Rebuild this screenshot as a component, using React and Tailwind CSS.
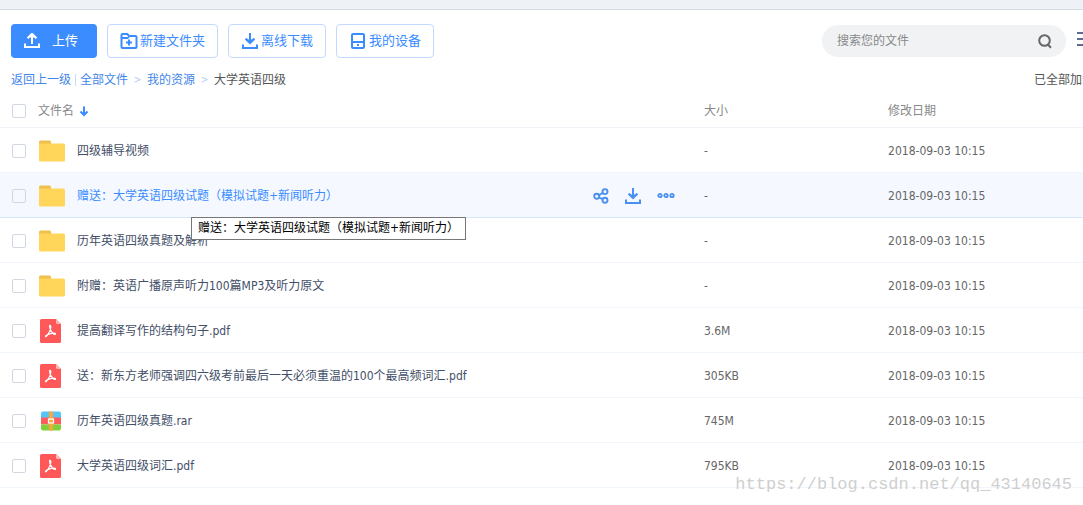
import React from "react";

const files = [
  { name: "四级辅导视频", type: "folder", size: "-" },
  { name: "赠送：大学英语四级试题（模拟试题+新闻听力）", type: "folder", size: "-", active: true },
  { name: "历年英语四级真题及解析", type: "folder", size: "-" },
  { name: "附赠：英语广播原声听力100篇MP3及听力原文", type: "folder", size: "-" },
  { name: "提高翻译写作的结构句子.pdf", type: "pdf", size: "3.6M" },
  { name: "送：新东方老师强调四六级考前最后一天必须重温的100个最高频词汇.pdf", type: "pdf", size: "305KB" },
  { name: "历年英语四级真题.rar", type: "rar", size: "745M" },
  { name: "大学英语四级词汇.pdf", type: "pdf", size: "795KB" },
];

function UploadIcon() {
  return (
    <svg width="16" height="16" viewBox="0 0 16 16" fill="none" stroke="currentColor" strokeWidth="2" aria-hidden="true">
      <path d="M8 11V2" />
      <path d="M3.6 5.200 8 .9l4.400 4.300" strokeWidth="2.200" />
      <path d="M5.500 4.500 8 2l2.500 2.500Z" fill="currentColor" stroke="none" />
      <path d="M1 10.500V14h14v-3.500" />
    </svg>
  );
}

function DownloadIcon() {
  return (
    <svg width="16" height="16" viewBox="0 0 16 16" fill="none" stroke="currentColor" strokeWidth="2" aria-hidden="true">
      <path d="M8 0v10" />
      <path d="M3.6 5.600 8 10l4.400-4.400" strokeWidth="2.200" />
      <path d="M5.500 6.500 8 9l2.500-2.500Z" fill="currentColor" stroke="none" />
      <path d="M1 11.500V15h14v-3.500" />
    </svg>
  );
}

function NewFolderIcon() {
  return (
    <svg width="18" height="16" viewBox="0 0 18 16" fill="none" stroke="currentColor" strokeWidth="2" aria-hidden="true">
      <path d="M1.500 14V2q0-1 1-1h4.800L9 3h6.500q1 0 1 1v10q0 1-1 1h-13q-1 0-1-1ZM1.500 5h6L9 3.500" />
      <path d="M9 6.500v6M6 9.500h6" />
    </svg>
  );
}

function DeviceIcon() {
  return (
    <svg width="16" height="16" viewBox="0 0 16 16" fill="none" stroke="currentColor" strokeWidth="2" aria-hidden="true">
      <rect x="2" y="1" width="12" height="14" rx="1" />
      <path d="M2 9h12" />
      <path d="M7 12h2" />
    </svg>
  );
}

function ShareIcon() {
  return (
    <svg width="16" height="16" viewBox="0 0 16 16" fill="none" stroke="currentColor" strokeWidth="1.900" aria-hidden="true">
      <circle cx="3.700" cy="8.200" r="2.500" />
      <circle cx="12" cy="3.600" r="2.500" />
      <circle cx="12" cy="12.300" r="2.500" />
      <path d="m6 7.200 3.800-2.300M6 9.500l3.700 1.700" />
    </svg>
  );
}

function MoreIcon() {
  return (
    <svg width="18" height="16" viewBox="0 0 18 16" fill="none" stroke="currentColor" strokeWidth="1.800" aria-hidden="true">
      <circle cx="3" cy="7.500" r="1.700" />
      <circle cx="9" cy="7.500" r="1.700" />
      <circle cx="15" cy="7.500" r="1.700" />
    </svg>
  );
}

function FileIcon({ type }) {
  if (type === "folder") {
    return (
      <svg width="26" height="22" viewBox="0 0 26 22" aria-hidden="true">
        <path d="M0 6V2Q0 .5 1.500 .5h9Q12 .5 12 2v4Z" fill="#eec04d" />
        <path d="M0 3.500h24.500Q26 3.500 26 5v15q0 1.500-1.500 1.500h-23Q0 21.500 0 20Z" fill="#ffd65a" />
      </svg>
    );
  }
  if (type === "pdf") {
    return (
      <svg width="26" height="24" viewBox="0 0 26 24" aria-hidden="true">
        <path d="M2.500 0H17l5 5v17.500q0 1.500-1.500 1.500h-18Q1 24 1 22.500v-21Q1 0 2.500 0Z" fill="#ff5858" />
        <path d="M17 0l5 5h-3.500Q17 5 17 3.500Z" fill="#ffb5b5" />
        <g fill="none" stroke="#fff" strokeWidth="1.200" strokeLinecap="round" strokeLinejoin="round">
          <path d="M10.500 6.500Q12 6 11.800 8.500 11.500 11 9.800 14 8 17.300 6.800 17.800 5.800 17.400 8 15.900 11.500 14.300 15 14.200 17 14.300 16.500 15.300 15.400 16 13.600 14 11.600 12 11 9.500 10.500 7.500 10.500 6.500Z" />
        </g>
      </svg>
    );
  }
  return (
    <svg width="26" height="20" viewBox="0 0 26 20" aria-hidden="true">
      <path d="M4 .5h16q2 0 2 2V7H2V2.500q0-2 2-2Z" fill="#55c5f7" />
      <path d="M2 6.500h20v7H2Z" fill="#ff5c5c" />
      <path d="M2 13.500h20v4q0 2-2 2H4q-2 0-2-2Z" fill="#80cf3c" />
      <path d="M10 .5h4v19h-4Z" fill="#f9a93c" />
      <rect x="9.500" y="8" width="5" height="4" fill="#f9a93c" stroke="#fff" strokeWidth="1.200" />
    </svg>
  );
}

function Check({ label }) {
  return (
    <input
      type="checkbox"
      aria-label={label}
      className="block size-3.5 shrink-0 appearance-none rounded-xs border border-[#d0d7e2] bg-transparent checked:bg-[#3b8cff]"
    />
  );
}

function ToolButton({ icon, children }) {
  return (
    <button
      type="button"
      className="flex h-[34px] shrink-0 items-center gap-0.5 rounded border border-[#c3d9ff] px-3 text-[13px] whitespace-nowrap text-[#3b8cff]"
    >
      {icon}
      {children}
    </button>
  );
}

function FileRow({ file }) {
  const { name, type, size, active } = file;
  return (
    <tr className={active ? "h-[45px] border-y border-[#d6e7fb] bg-[#f5f9ff]" : "h-[45px] border-b border-[#f0f5fb]"}>
      <td className="p-0 pt-0.5">
        <div className="relative flex items-center pl-3">
          <Check label={name} />
          <span className="mr-3 ml-[13px] shrink-0">
            <FileIcon type={type} />
          </span>
          <a href="#" className={active ? "text-[#3b8cff]" : "text-[#424e67]"}>
            {name}
          </a>
          {active && (
            <>
              <div className="mr-[29px] ml-auto flex gap-4 text-[#4a90f0]">
                <button type="button" aria-label="分享"><ShareIcon /></button>
                <button type="button" aria-label="下载"><DownloadIcon /></button>
                <button type="button" aria-label="更多"><MoreIcon /></button>
              </div>
              <div
                role="tooltip"
                className="absolute top-8 left-[191px] z-10 flex h-[23px] items-center border border-[#767676] bg-white px-[6px] whitespace-nowrap text-black"
              >
                {name}
              </div>
            </>
          )}
        </div>
      </td>
      <td className="p-0 pt-0.5 text-[#666]">{size}</td>
      <td className="p-0 pt-0.5 text-[#666]">2018-09-03 10:15</td>
    </tr>
  );
}

export default function App() {
  return (
    <div className="relative min-h-screen overflow-hidden bg-white font-['DejaVu_Sans_Condensed','Noto_Sans_CJK_SC',sans-serif] text-xs leading-4">
      <div className="h-2.5 border-b border-[#d3dce5] bg-[#eef2f7]" />

      <div className="flex items-center pt-3.5 pl-[11px]">
        <div className="flex gap-2.5">
          <button
            type="button"
            className="flex h-[34px] shrink-0 items-center gap-3 rounded bg-[#3b8cff] pr-[19px] pl-[13px] text-[13px] whitespace-nowrap text-white"
          >
            <UploadIcon />
            上传
          </button>
          <ToolButton icon={<NewFolderIcon />}>新建文件夹</ToolButton>
          <ToolButton icon={<span className="px-px"><DownloadIcon /></span>}>离线下载</ToolButton>
          <ToolButton icon={<span className="px-px"><DeviceIcon /></span>}>我的设备</ToolButton>
        </div>
        <div className="ml-auto flex h-8 w-[244px] items-center rounded-full bg-[#f0f2f4] pr-3.5 pl-[15px]">
          <input
            type="text"
            aria-label="搜索您的文件"
            placeholder="搜索您的文件"
            className="min-w-0 flex-1 bg-transparent outline-none placeholder:text-[#888]"
          />
          <button type="button" aria-label="搜索" className="text-[#666]">
            <svg width="14" height="16" viewBox="0 0 14 16" fill="none" stroke="currentColor" strokeWidth="2" aria-hidden="true">
              <circle cx="6.500" cy="7.500" r="5.300" />
              <path d="m9.800 11.500 3.200 3.200" />
            </svg>
          </button>
        </div>
        <button type="button" aria-label="列表" className="ml-[11px] w-1.5 overflow-hidden text-[#5f6b8f]">
          <svg width="18" height="20" viewBox="0 0 18 20" fill="none" stroke="currentColor" strokeWidth="2" aria-hidden="true">
            <path d="M0 2h18M0 8h18M0 14h18" />
          </svg>
        </button>
      </div>

      <div className="flex h-[43px] items-center pl-[11px] whitespace-nowrap text-[#3f86e8]">
        <a href="#">返回上一级</a>
        <span className="mx-1 h-3 w-px bg-[#c9dcf5]" />
        <a href="#">全部文件</a>
        <span className="w-[19px] text-center text-[10px] text-[#b5cdf0]">&gt;</span>
        <a href="#">我的资源</a>
        <span className="w-[19px] text-center text-[10px] text-[#b5cdf0]">&gt;</span>
        <span className="text-[#555]">大学英语四级</span>
        <span className="ml-auto w-[49px] text-[#555]">已全部加载</span>
      </div>

      <table className="w-full table-fixed border-collapse text-left">
        <colgroup>
          <col className="w-[65%]" />
          <col className="w-[17%]" />
          <col className="w-[18%]" />
        </colgroup>
        <thead className="text-[#888]">
          <tr className="h-[26px] border-b border-[#f0f3f7] align-top">
            <th className="p-0 font-normal">
              <div className="flex items-center pt-0.5 pl-3">
                <Check label="全选" />
                <span className="ml-3">文件名</span>
                <svg width="12" height="12" viewBox="0 0 10 12" className="ml-1" fill="none" stroke="#3b8cff" strokeWidth="2" aria-hidden="true">
                  <path d="M5 1.500v8M1.500 6.500 5 10l3.500-3.500" />
                </svg>
              </div>
            </th>
            <th className="p-0 pt-0.5 font-normal">大小</th>
            <th className="p-0 pt-0.5 font-normal">修改日期</th>
          </tr>
        </thead>
        <tbody>
          {files.map((file) => (
            <FileRow key={file.name} file={file} />
          ))}
        </tbody>
      </table>

      <div className="pointer-events-none absolute right-[11px] bottom-2 font-['Liberation_Mono',monospace] text-[17px] leading-6 text-[#cfcfcf]">
        https://blog.csdn.net/qq_43140645
      </div>
    </div>
  );
}
